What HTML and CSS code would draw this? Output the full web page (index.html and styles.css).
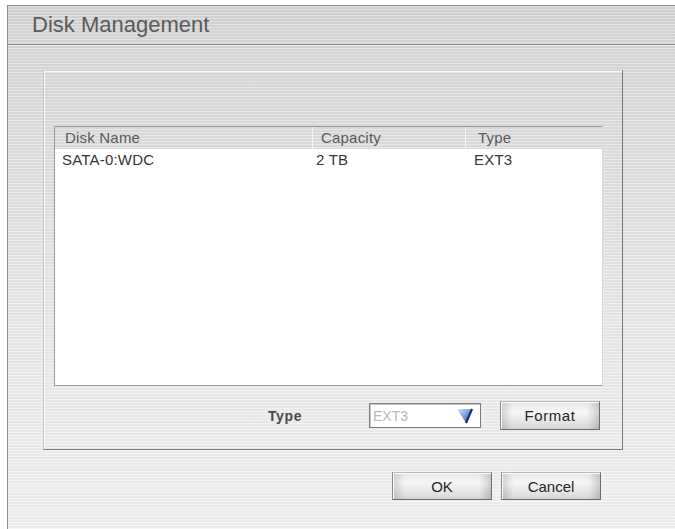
FILE: index.html
```html
<!DOCTYPE html>
<html>
<head>
<meta charset="utf-8">
<title>Disk Management</title>
<link rel="stylesheet" href="styles.css">
</head>
<body>
<div class="window">
  <div class="titlebar">Disk Management</div>
  <div class="content">
    <div class="panel">
      <div class="list">
        <div class="list-head">
          <div class="hcell c1">Disk Name</div>
          <div class="hcell c2">Capacity</div>
          <div class="hcell c3">Type</div>
        </div>
        <div class="list-body">
          <div class="row">
            <div class="cell c1">SATA-0:WDC</div>
            <div class="cell c2">2 TB</div>
            <div class="cell c3">EXT3</div>
          </div>
        </div>
      </div>
      <div class="controls">
        <div class="type-label">Type</div>
        <div class="select">
          <span class="select-text">EXT3</span>
          <svg class="arrow" width="18" height="16" viewBox="0 0 18 16">
            <defs>
              <linearGradient id="ag" x1="0" y1="0" x2="1" y2="1">
                <stop offset="0" stop-color="#d4e3f9"/>
                <stop offset="0.45" stop-color="#7fa6e6"/>
                <stop offset="1" stop-color="#2d53a3"/>
              </linearGradient>
            </defs>
            <path d="M1 1 L16 1 L10 15 Z" fill="url(#ag)"/>
            <path d="M16 1 L10 15" stroke="#1c2f63" stroke-width="2.2" fill="none"/>
          </svg>
        </div>
        <button class="btn btn-format">Format</button>
      </div>
    </div>
    <div class="footer">
      <button class="btn btn-ok">OK</button>
      <button class="btn btn-cancel">Cancel</button>
    </div>
  </div>
</div>
</body>
</html>
```
FILE: styles.css
```css
html, body {
  margin: 0;
  padding: 0;
  background: #ffffff;
}
body {
  font-family: "Liberation Sans", Arial, sans-serif;
  width: 675px;
  height: 529px;
  overflow: hidden;
}
.window {
  margin: 5px 0 0 7px;
  height: 524px;
  box-sizing: border-box;
  border-left: 1px solid #8c8c8c;
  border-top: 1px solid #8c8c8c;
  background:
    repeating-linear-gradient(to bottom, rgba(255,255,255,0.3) 0px, rgba(255,255,255,0.3) 1px, rgba(0,0,0,0.025) 1px, rgba(0,0,0,0.025) 3px),
    linear-gradient(to bottom, #d5d5d5 0%, #dfdfdf 30%, #eaeaea 65%, #f2f2f2 100%);
  display: flex;
  flex-direction: column;
}
.titlebar {
  height: 38px;
  border-bottom: 1px solid #8a8a8a;
  box-shadow: 0 1px 0 #eeeeee;
  padding-left: 24px;
  display: flex;
  align-items: center;
  font-size: 22px;
  color: #5a5a5a;
}
.content {
  padding: 25px 0 0 35px;
}
.panel {
  width: 580px;
  height: 380px;
  box-sizing: border-box;
  border: 1px solid #777777;
  border-top-color: #cfcfcf;
  border-left-color: #c4c4c4;
  box-shadow: inset 1px 1px 0 #fafafa;
  padding: 55px 0 0 10px;
}
.list {
  width: 549px;
  height: 260px;
  box-sizing: border-box;
  border: 1px solid #9a9a9a;
  border-right-color: #d8d8d8;
  display: flex;
  flex-direction: column;
}
.list-head {
  height: 22px;
  display: grid;
  grid-template-columns: 257px 153px 1fr;
  align-items: center;
  color: #5a5a5a;
  font-size: 15px;
  letter-spacing: 0.2px;
}
.hcell {
  height: 22px;
  line-height: 22px;
}
.hcell.c1 { padding-left: 10px; }
.hcell.c2 { padding-left: 8px; border-left: 1px solid #f4f4f4; }
.hcell.c3 { padding-left: 12px; border-left: 1px solid #f4f4f4; }
.list-body {
  flex: 1;
  background: #ffffff;
}
.row {
  display: grid;
  grid-template-columns: 257px 153px 1fr;
  height: 22px;
  line-height: 22px;
  font-size: 15px;
  color: #363636;
  letter-spacing: 0.2px;
}
.cell.c1 { padding-left: 7px; }
.cell.c2 { padding-left: 4px; }
.cell.c3 { padding-left: 9px; }
.controls {
  margin-top: 15px;
  height: 29px;
  display: flex;
  align-items: center;
  padding-left: 214px;
}
.type-label {
  width: 101px;
  font-size: 14px;
  font-weight: bold;
  color: #4a4a4a;
  letter-spacing: 0.6px;
}
.select {
  width: 112px;
  height: 25px;
  box-sizing: border-box;
  border: 1px solid #7c7c7c;
  box-shadow: inset 1px 1px 0 #c8c8c8;
  background: #ffffff;
  display: flex;
  align-items: center;
  justify-content: space-between;
  padding: 0 3px 0 3px;
}
.select-text {
  font-size: 14px;
  color: #b9b9b9;
}
.arrow {
  display: block;
  margin-right: 3px;
}
.btn {
  font-family: "Liberation Sans", Arial, sans-serif;
  font-size: 15px;
  color: #262626;
  box-sizing: border-box;
  border: 1px solid #8a8a8a;
  border-top-color: #b8b8b8;
  border-bottom-color: #6a6a6a;
  border-right-color: #6f6f6f;
  background:
    linear-gradient(to right, rgba(0,0,0,0.14) 0%, rgba(0,0,0,0) 12%, rgba(0,0,0,0) 88%, rgba(0,0,0,0.16) 100%),
    linear-gradient(to bottom, #e6e6e6 0%, #f6f6f6 35%, #ececec 60%, #d6d6d6 100%);
  box-shadow: inset 1px 1px 0 #fbfbfb;
  padding: 0;
  cursor: default;
}
.btn-format {
  margin-left: 19px;
  width: 100px;
  height: 29px;
  letter-spacing: 0.6px;
}
.footer {
  margin-top: 22px;
  padding-left: 349px;
  display: flex;
  gap: 9px;
}
.btn-ok, .btn-cancel {
  width: 100px;
  height: 28px;
}
```
